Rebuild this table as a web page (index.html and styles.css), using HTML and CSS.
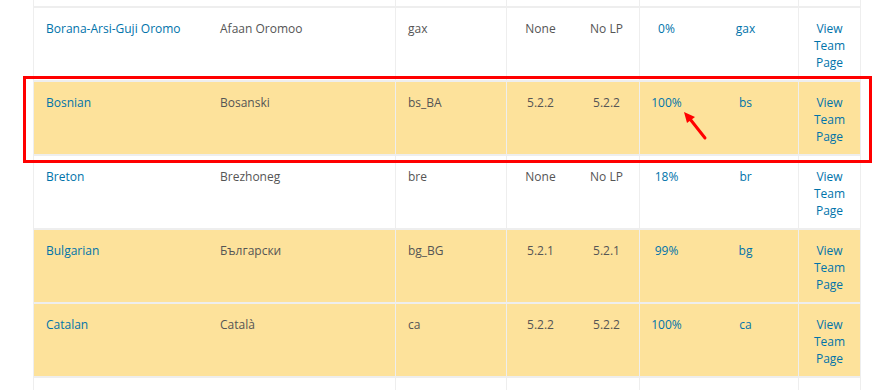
FILE: index.html
```html
<!DOCTYPE html>
<html>
<head>
<meta charset="utf-8">
<link rel="stylesheet" href="styles.css">
</head>
<body>
<div class="wrap">
  <table class="langs">
    <colgroup>
      <col class="c-name"><col class="c-native"><col class="c-locale"><col class="c-ver"><col class="c-lp"><col class="c-pct"><col class="c-code"><col class="c-team">
    </colgroup>
    <tbody>
      <tr class="stub">
        <td class="b-left"></td><td></td><td class="b-left"></td><td class="b-left"></td><td></td><td class="b-left"></td><td></td><td class="b-left b-right"></td>
      </tr>
      <tr>
        <td class="b-left"><a href="#">Borana-Arsi-Guji Oromo</a></td>
        <td>Afaan Oromoo</td>
        <td class="b-left">gax</td>
        <td class="b-left center">None</td>
        <td class="center">No LP</td>
        <td class="b-left center"><a href="#">0%</a></td>
        <td class="center"><a href="#">gax</a></td>
        <td class="b-left b-right center"><a href="#">View Team Page</a></td>
      </tr>
      <tr class="hl">
        <td class="b-left"><a href="#">Bosnian</a></td>
        <td>Bosanski</td>
        <td class="b-left">bs_BA</td>
        <td class="b-left center">5.2.2</td>
        <td class="center">5.2.2</td>
        <td class="b-left center"><a href="#">100%</a></td>
        <td class="center"><a href="#">bs</a></td>
        <td class="b-left b-right center"><a href="#">View Team Page</a></td>
      </tr>
      <tr>
        <td class="b-left"><a href="#">Breton</a></td>
        <td>Brezhoneg</td>
        <td class="b-left">bre</td>
        <td class="b-left center">None</td>
        <td class="center">No LP</td>
        <td class="b-left center"><a href="#">18%</a></td>
        <td class="center"><a href="#">br</a></td>
        <td class="b-left b-right center"><a href="#">View Team Page</a></td>
      </tr>
      <tr class="hl">
        <td class="b-left"><a href="#">Bulgarian</a></td>
        <td>Български</td>
        <td class="b-left">bg_BG</td>
        <td class="b-left center">5.2.1</td>
        <td class="center">5.2.1</td>
        <td class="b-left center"><a href="#">99%</a></td>
        <td class="center"><a href="#">bg</a></td>
        <td class="b-left b-right center"><a href="#">View Team Page</a></td>
      </tr>
      <tr class="hl">
        <td class="b-left"><a href="#">Catalan</a></td>
        <td>Català</td>
        <td class="b-left">ca</td>
        <td class="b-left center">5.2.2</td>
        <td class="center">5.2.2</td>
        <td class="b-left center"><a href="#">100%</a></td>
        <td class="center"><a href="#">ca</a></td>
        <td class="b-left b-right center"><a href="#">View Team Page</a></td>
      </tr>
      <tr>
        <td class="b-left"></td><td></td><td class="b-left"></td><td class="b-left"></td><td></td><td class="b-left"></td><td></td><td class="b-left b-right"></td>
      </tr>
    </tbody>
  </table>
  <div class="callout"></div>
  <svg class="arrow" width="30" height="32" viewBox="0 0 30 32">
    <line x1="24" y1="28" x2="9" y2="9" stroke="#f00" stroke-width="3" stroke-linecap="round"/>
    <polygon points="3,2 14,7 6,13" fill="#f00"/>
  </svg>
</div>
</body>
</html>
```

FILE: styles.css
```css
html, body {
  margin: 0;
  padding: 0;
  background: #fff;
}

body {
  font-family: "Open Sans", "Liberation Sans", sans-serif;
  font-size: 12px;
  line-height: 17px;
  color: #555;
}

.wrap {
  position: relative;
  padding-left: 33px;
  height: 390px;
  overflow: hidden;
}

a {
  color: #0073aa;
  text-decoration: none;
}

.langs {
  width: 828px;
  table-layout: fixed;
  border-collapse: separate;
  border-spacing: 0;
}

.c-name { width: 175px; }
.c-native { width: 187px; }
.c-locale { width: 111px; }
.c-ver { width: 68px; }
.c-lp { width: 65px; }
.c-pct { width: 54px; }
.c-code { width: 105px; }
.c-team { width: 63px; }

.langs td {
  box-sizing: border-box;
  height: 74px;
  padding: 12px 12px 9px;
  vertical-align: top;
  text-align: left;
  border-top: 2px solid #eee;
  word-wrap: break-word;
}

.langs tr.stub td {
  height: 6px;
  padding: 0;
  border-top: none;
}

.langs td.center {
  text-align: center;
  padding-left: 4px;
  padding-right: 4px;
}

.langs td.b-left { border-left: 1px solid #eee; }
.langs td.b-right { border-right: 1px solid #eee; }

.langs td:last-child {
  padding-left: 12px;
  padding-right: 12px;
}

.langs tr.hl td {
  background: #fde29b;
}

.callout {
  position: absolute;
  left: 23px;
  top: 76px;
  width: 849px;
  height: 87px;
  box-sizing: border-box;
  border: 3px solid #f00;
}

.arrow {
  position: absolute;
  left: 681px;
  top: 110px;
}
```
